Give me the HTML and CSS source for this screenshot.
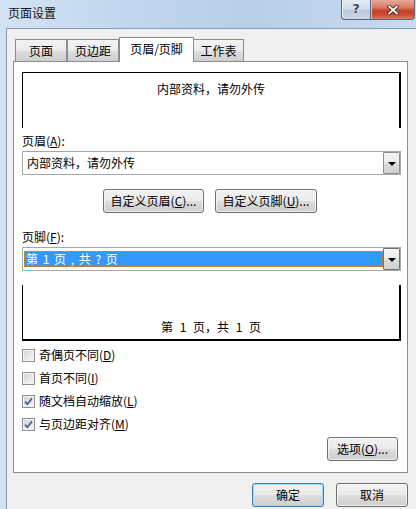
FILE: index.html
```html
<!DOCTYPE html>
<html lang="zh-CN">
<head>
<meta charset="utf-8">
<title>页面设置</title>
<link rel="stylesheet" href="styles.css">
</head>
<body>
<div class="window">
  <div class="titlebar">
    <span class="title">页面设置</span>
    <div class="caption-btns">
      <div class="cbtn help"><span class="q">?</span></div>
      <div class="cbtn close">
        <svg width="12" height="10" viewBox="0 0 12 10">
          <path d="M2 1.5 L10 8.5 M10 1.5 L2 8.5" stroke="#4a2a24" stroke-width="3.6" stroke-linecap="square" fill="none"/>
          <path d="M2 1.5 L10 8.5 M10 1.5 L2 8.5" stroke="#ffffff" stroke-width="1.8" stroke-linecap="square" fill="none"/>
        </svg>
      </div>
    </div>
  </div>
  <div class="client">
    <div class="tabs">
      <div class="tab t1">页面</div>
      <div class="tab t2">页边距</div>
      <div class="tab active">页眉/页脚</div>
      <div class="tab t4">工作表</div>
    </div>
    <div class="panel">
      <div class="preview preview-top">内部资料，请勿外传</div>
      <div class="label label-head">页眉(<u>A</u>):</div>
      <div class="combo">
        <div class="combo-text">内部资料，请勿外传</div>
        <div class="drop"><span class="arrow"></span></div>
      </div>
      <div class="btn-row">
        <div class="btn custom-head">自定义页眉(<u>C</u>)...</div>
        <div class="btn custom-foot">自定义页脚(<u>U</u>)...</div>
      </div>
      <div class="label label-foot">页脚(<u>F</u>):</div>
      <div class="combo focused">
        <div class="combo-text selected">第 1 页 , 共 ? 页</div>
        <div class="drop"><span class="arrow"></span></div>
      </div>
      <div class="preview preview-bottom">第 1 页，共 1 页</div>
      <div class="checks">
        <div class="check-row"><span class="box"></span><span>奇偶页不同(<u>D</u>)</span></div>
        <div class="check-row"><span class="box"></span><span>首页不同(<u>I</u>)</span></div>
        <div class="check-row"><span class="box checked"><svg width="11" height="11" viewBox="0 0 11 11"><path d="M2 5.6 L4.4 8.2 L9 2.4" stroke="#4c5f96" stroke-width="1.7" fill="none"/></svg></span><span>随文档自动缩放(<u>L</u>)</span></div>
        <div class="check-row"><span class="box checked"><svg width="11" height="11" viewBox="0 0 11 11"><path d="M2 5.6 L4.4 8.2 L9 2.4" stroke="#4c5f96" stroke-width="1.7" fill="none"/></svg></span><span>与页边距对齐(<u>M</u>)</span></div>
      </div>
      <div class="options-row">
        <div class="btn options">选项(<u>O</u>)...</div>
      </div>
    </div>
    <div class="dialog-btns">
      <div class="btn ok">确定</div>
      <div class="btn cancel">取消</div>
    </div>
  </div>
</div>
</body>
</html>
```
FILE: styles.css
```css
* { box-sizing: border-box; }
html, body { margin: 0; padding: 0; }
body {
  font-family: "Noto Sans CJK SC", "Microsoft YaHei", sans-serif;
  font-size: 12px;
  line-height: 16px;
  color: #000;
  background: #f0f0f0;
}
u { text-decoration: underline; text-underline-offset: 1px; }

.window {
  width: 416px;
  height: 509px;
  display: flex;
  flex-direction: column;
  overflow: hidden;
  background: linear-gradient(to right, #d3e3f4 0%, #c2d7ee 30%, #b8cfe9 60%, #c7dbf0 100%);
}

/* title bar */
.titlebar {
  height: 28px;
  flex: none;
  display: flex;
  align-items: flex-start;
}
.title {
  padding: 5px 0 0 8px;
  color: #111;
}
.caption-btns {
  margin-left: auto;
  margin-right: 1px;
  display: flex;
}
.cbtn {
  height: 20px;
  display: flex;
  align-items: center;
  justify-content: center;
  border: 1px solid #58657a;
  border-top: none;
}
.help {
  width: 29px;
  border-right: none;
  border-bottom-left-radius: 4px;
  background: linear-gradient(#e4ecf6 0%, #d3dfec 45%, #bccbdc 55%, #c9d6e5 100%);
  box-shadow: inset 1px 0 0 #eef3f9;
}
.help .q {
  font-family: "DejaVu Sans", sans-serif;
  font-weight: bold;
  font-size: 13px;
  color: #3a4656;
  text-shadow: 0 0 2px #fff, 0 0 1px #fff;
  margin-top: -1px;
}
.close {
  width: 45px;
  border-bottom-right-radius: 4px;
  background: linear-gradient(#e9a899 0%, #db7a66 40%, #c8432c 55%, #c9462f 75%, #dc7a5f 100%);
  box-shadow: inset 1px 0 0 #f0b9ad;
}

/* client */
.client {
  flex: 1;
  margin-left: 6px;
  border-left: 1px solid #8a9ab0;
  border-top: 1px solid #8a9ab0;
  background: #f0f0f0;
  padding: 8px 8px 0 6px;
  display: flex;
  flex-direction: column;
}

/* tabs */
.tabs {
  height: 24px;
  display: flex;
  align-items: flex-end;
  padding-left: 2px;
}
.tab {
  height: 22px;
  border: 1px solid #898c95;
  border-bottom: none;
  background: linear-gradient(#f3f3f3 0%, #ebebeb 50%, #dddddd 51%, #cfcfcf 100%);
  display: flex;
  align-items: center;
  justify-content: center;
  padding-top: 1px;
}
.t1 { width: 52px; }
.t2 { width: 52px; }
.t4 { width: 51px; margin-left: -1px; }
.tab.active {
  width: 75px;
  height: 25px;
  margin-bottom: -1px;
  background: #fff;
  position: relative;
  z-index: 1;
  padding-top: 0;
  padding-bottom: 2px;
}

/* panel */
.panel {
  height: 412px;
  border: 1px solid #898c95;
  background: #fff;
  padding: 10px 6px 0 8px;
  display: flex;
  flex-direction: column;
}
.preview {
  height: 56px;
  border-left: 1px solid #000;
  border-right: 2px solid #000;
  text-align: center;
  display: flex;
  flex-direction: column;
  align-items: center;
}
.preview-top {
  border-top: 1px solid #000;
  padding-top: 8px;
}
.preview-bottom {
  margin-top: 14px;
  border-bottom: 2px solid #000;
  justify-content: flex-end;
  padding-bottom: 4px;
  word-spacing: 4px;
}

.label { height: 16px; }
.label-head { margin-top: 5px; }
.label-foot { margin-top: 16px; }

.combo {
  margin-top: 2px;
  height: 24px;
  border: 1px solid #a7a7a7;
  background: #fff;
  display: flex;
  align-items: stretch;
}
.combo-text {
  flex: 1;
  padding-left: 4px;
  display: flex;
  align-items: center;
}
.combo-text.selected {
  margin: 3px 0 3px 1px;
  padding-left: 2px;
  background: #3399ff;
  color: #fff;
  outline: 1px dotted #c9893b;
  outline-offset: -1px;
  word-spacing: 2px;
  white-space: pre;
}
.drop {
  width: 17px;
  border: 1px solid #8d8d8d;
  border-radius: 1px;
  background: linear-gradient(#f4f4f4 0%, #ebebeb 50%, #dcdcdc 51%, #d0d0d0 100%);
  display: flex;
  align-items: center;
  justify-content: center;
}
.focused .drop { border-color: #6f6f6f; }
.arrow {
  width: 0;
  height: 0;
  border-left: 4px solid transparent;
  border-right: 4px solid transparent;
  border-top: 4px solid #000;
  margin-top: 1px;
}

/* buttons */
.btn {
  height: 24px;
  border: 1px solid #707070;
  border-radius: 3px;
  background: linear-gradient(#f2f2f2 0%, #ebebeb 50%, #dddddd 51%, #cfcfcf 100%);
  box-shadow: inset 0 0 0 1px rgba(255,255,255,0.6);
  display: flex;
  align-items: center;
  justify-content: center;
  padding-bottom: 1px;
}
.btn-row {
  margin-top: 14px;
  display: flex;
  justify-content: center;
  gap: 11px;
  padding-right: 3px;
}
.custom-head { width: 101px; }
.custom-foot { width: 102px; }

.checks {
  margin-top: 6px;
  display: flex;
  flex-direction: column;
  gap: 7px;
}
.check-row {
  height: 16px;
  display: flex;
  align-items: center;
  gap: 4px;
}
.box {
  width: 13px;
  height: 13px;
  border: 1px solid #8e8f8f;
  background: linear-gradient(135deg, #d2d2d2 0%, #e9e9e9 60%, #f6f6f6 100%);
  box-shadow: inset 0 0 0 1px #f4f4f4;
  display: flex;
  align-items: center;
  justify-content: center;
}
.box svg { display: block; }

.options-row {
  margin-top: 5px;
  display: flex;
  justify-content: flex-end;
  padding-right: 3px;
}
.options { width: 71px; }

.dialog-btns {
  margin-top: 10px;
  display: flex;
  justify-content: flex-end;
  gap: 12px;
}
.ok, .cancel { width: 72px; }
.ok {
  border-color: #3c7fb1;
  box-shadow: inset 0 0 0 1px #a4d8f3;
}
```
